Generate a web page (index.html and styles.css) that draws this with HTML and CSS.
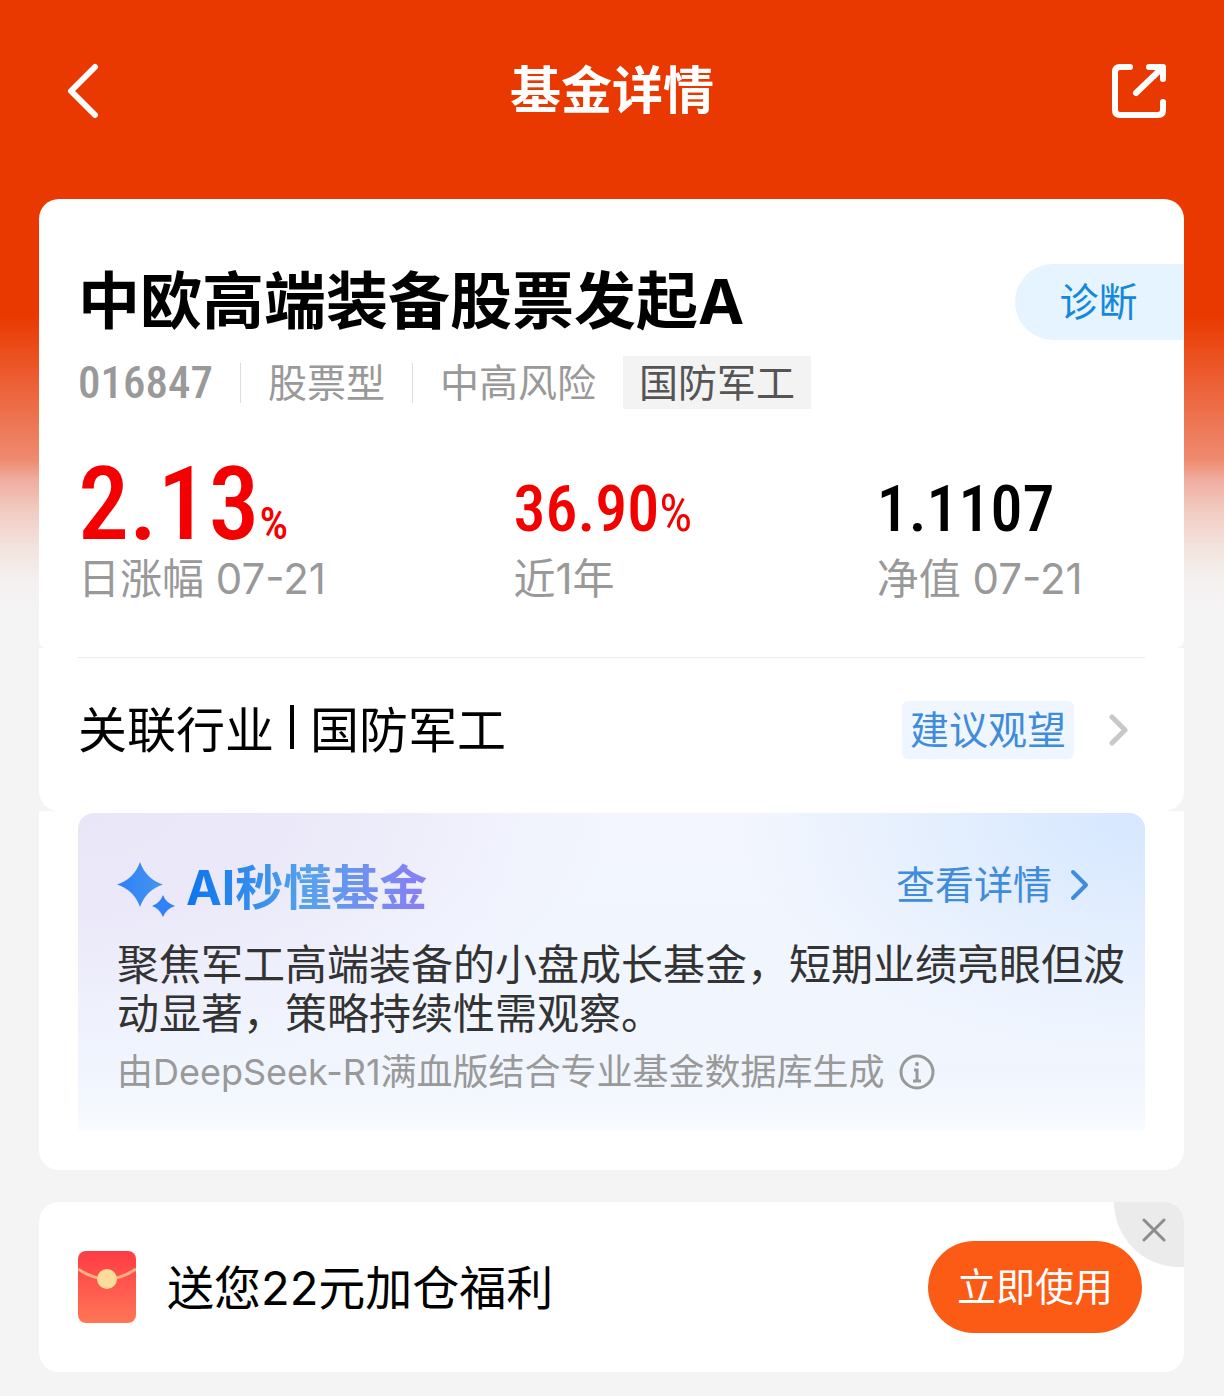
FILE: index.html
```html
<!DOCTYPE html>
<html lang="zh-CN">
<head>
    <meta charset="UTF-8">
    <meta name="viewport" content="width=device-width, initial-scale=1.0">
    <title>基金详情</title>
    <link rel="stylesheet" href="styles.css">
</head>
<body>
    <header class="topbar">
        <button type="button" class="icon-btn" aria-label="返回">
            <svg width="56" height="56" viewBox="0 0 56 56" fill="none" stroke="#fff" stroke-width="6" stroke-linecap="round" stroke-linejoin="round">
                <path d="M39 4 15 28 39 52"/>
            </svg>
        </button>
        <h1>基金详情</h1>
        <button type="button" class="icon-btn" aria-label="分享">
            <svg width="56" height="56" viewBox="0 0 56 56" fill="none" stroke="#fff" stroke-width="6" stroke-linecap="round" stroke-linejoin="round">
                <path d="M18 4H8Q3 4 3 9v38q0 5 5 5h38q5 0 5-5V39"/>
                <path d="M37 4h14v12M24 30 49 6"/>
                <path d="M41 4h10v10Z" fill="#fff" stroke="none"/>
            </svg>
        </button>
    </header>

    <main>
        <section class="card summary">
            <div class="title-row">
                <h2>中欧高端装备股票发起A</h2>
                <button type="button" class="diagnose">诊断</button>
            </div>
            <div class="meta">
                <span class="code">016847</span>
                <span class="divider"></span>
                <span>股票型</span>
                <span class="divider"></span>
                <span>中高风险</span>
                <span class="tag">国防军工</span>
            </div>
            <dl class="stats">
                <div>
                    <dd class="value up big">2.13<small>%</small></dd>
                    <dt>日涨幅 07-21</dt>
                </div>
                <div>
                    <dd class="value up">36.90<span class="percent">%</span></dd>
                    <dt>近1年</dt>
                </div>
                <div>
                    <dd class="value">1.1107</dd>
                    <dt>净值 07-21</dt>
                </div>
            </dl>
        </section>

        <section class="card industry">
            <a href="#" class="industry-link">
                <span class="industry-name">关联行业<i class="bar"></i>国防军工</span>
                <span class="advice">建议观望</span>
                <svg width="20" height="32" viewBox="0 0 20 32" fill="none" stroke="#c8c8c8" stroke-width="5" stroke-linecap="round" stroke-linejoin="round">
                    <path d="M3 3 16 16 3 29"/>
                </svg>
            </a>
        </section>

        <section class="card ai">
            <div class="ai-box">
                <div class="ai-head">
                    <svg width="58" height="58" viewBox="0 0 58 58">
                        <defs>
                            <linearGradient id="spark" x1="0" y1="0" x2="1" y2="0">
                                <stop offset="0" stop-color="#2f80f6"/>
                                <stop offset="1" stop-color="#4396f0"/>
                            </linearGradient>
                        </defs>
                        <path fill="url(#spark)" d="M23 3Q29 20 46 25.500 29 31 23 48 17 31 0 25.500 17 20 23 3Z"/>
                        <path fill="#2f83f7" d="M46 36Q49 44 58 47 49 50 46 58 43 50 35 47 43 44 46 36Z"/>
                    </svg>
                    <h3>AI秒懂基金</h3>
                    <a href="#" class="more">
                        <span>查看详情</span>
                        <svg width="20" height="32" viewBox="0 0 20 32" fill="none" stroke="#3f8bdc" stroke-width="4" stroke-linecap="round" stroke-linejoin="round">
                            <path d="M3 3 16 16 3 29"/>
                        </svg>
                    </a>
                </div>
                <p class="ai-text">聚焦军工高端装备的小盘成长基金，短期业绩亮眼但波动显著，策略持续性需观察。</p>
                <p class="ai-source">由DeepSeek-R1满血版结合专业基金数据库生成
                    <svg width="36" height="36" viewBox="0 0 36 36" fill="none" stroke="#999" stroke-width="3">
                        <circle cx="18" cy="18" r="16"/>
                        <path d="M15 16h3v11M14 27h8"/>
                        <circle cx="18" cy="10" r="2" fill="#999" stroke="none"/>
                    </svg>
                </p>
            </div>
        </section>

        <section class="card offer">
            <svg width="58" height="72" viewBox="0 0 58 72">
                <defs>
                    <linearGradient id="packet" x1="0" y1="0" x2="0" y2="1">
                        <stop offset="0" stop-color="#ff3b45"/>
                        <stop offset="1" stop-color="#ff7656"/>
                    </linearGradient>
                </defs>
                <rect width="58" height="72" rx="8" fill="url(#packet)"/>
                <path d="M0 18Q29 38 58 18" fill="none" stroke="#ffb184" stroke-width="3"/>
                <circle cx="29" cy="28" r="10" fill="#fddb9b"/>
            </svg>
            <p>送您22元加仓福利</p>
            <button type="button" class="use">立即使用</button>
            <button type="button" class="close" aria-label="关闭">
                <svg width="24" height="24" viewBox="0 0 24 24" stroke="#8c8c8c" stroke-width="3" stroke-linecap="round">
                    <path d="M2 2 22 22M22 2 2 22"/>
                </svg>
            </button>
        </section>
    </main>
</body>
</html>
```

FILE: styles.css
```css
* {
    box-sizing: border-box;
}

body {
    margin: 0;
    font-family: Inter, "Noto Sans CJK SC", sans-serif;
    color: #000;
    background: #f4f4f4 linear-gradient(#ea3900 0, #ea3900 315px, #ee8b70 460px, #f0ada0 480px, #f2cdc4 513px, #f3e3de 547px, #f4f0ef 580px, #f4f4f4 612px) no-repeat;
}

h1, h2, h3, p, dl, dd, dt {
    margin: 0;
}

button {
    border: none;
    padding: 0;
    font-family: inherit;
    cursor: pointer;
}

a {
    text-decoration: none;
    color: inherit;
}

svg {
    display: block;
    flex: none;
}

.topbar {
    display: flex;
    align-items: center;
    justify-content: space-between;
    height: 199px;
    padding: 0 56px 18px;
}

.topbar h1 {
    font-size: 51px;
    line-height: 60px;
    color: #fff;
}

.icon-btn {
    background: none;
}

main {
    padding: 0 40px 24px 39px;
}

.card {
    background: #fff;
    padding: 0 39px;
}

.summary {
    border-radius: 20px 20px 8px 8px;
    padding-top: 65px;
    padding-bottom: 42px;
}

.title-row {
    display: flex;
    align-items: center;
    justify-content: space-between;
    margin-right: -39px;
}

h2 {
    font-size: 62px;
    line-height: 76px;
}

.diagnose {
    width: 169px;
    height: 76px;
    padding: 0 2px 6px 0;
    border-radius: 38px 0 0 38px;
    background: #e6f4ff;
    color: #1488dc;
    font-size: 39px;
}

.meta {
    display: flex;
    align-items: center;
    gap: 27px;
    margin-top: 16px;
    font-size: 39px;
    line-height: 53px;
    color: #999;
}

.code {
    font-family: "Roboto Condensed", Roboto, sans-serif;
    font-size: 45px;
    font-weight: 500;
}

.divider {
    width: 1px;
    height: 40px;
    background: #ddd;
}

.tag {
    padding: 0 16px;
    background: #f3f3f3;
    color: #555;
}

.stats {
    display: grid;
    grid-template-columns: 435fr 363fr 268fr;
    margin-top: 47px;
}

.stats > div {
    display: flex;
    flex-direction: column;
    justify-content: flex-end;
}

.value {
    font-family: "Roboto Condensed", Roboto, sans-serif;
    font-size: 64px;
    font-weight: 500;
    line-height: 84px;
}

.up {
    color: #f40000;
}

.big {
    font-size: 102px;
    line-height: 96px;
}

.value small {
    font-size: 45px;
    line-height: 45px;
}

.percent {
    font-size: 52px;
    font-weight: normal;
    line-height: 52px;
}

.stats dt {
    font-size: 42px;
    line-height: 54px;
    color: #999;
}

.industry {
    border-radius: 0 0 20px 20px;
    padding-top: 9px;
}

.industry-link {
    display: flex;
    align-items: center;
    height: 154px;
    padding-right: 16px;
    padding-bottom: 10px;
    border-top: 1px solid #ececec;
}

.industry-name {
    display: flex;
    align-items: center;
    flex: 1;
    padding-bottom: 6px;
    font-size: 49px;
}

.bar {
    width: 4px;
    height: 44px;
    margin: 0 16px;
    background: #000;
}

.advice {
    margin-right: 35px;
    padding: 0 8px;
    border-radius: 6px;
    background: #eff6ff;
    color: #3f8bdc;
    font-size: 39px;
    line-height: 58px;
}

.ai {
    border-radius: 0 0 20px 20px;
    padding-top: 2px;
    padding-bottom: 39px;
}

.ai-box {
    padding: 45px 20px 35px 39px;
    border-radius: 16px 16px 4px 4px;
    background:
        linear-gradient(to bottom, rgba(248, 251, 255, 0) 80%, #f8fbff 100%),
        radial-gradient(ellipse 38% 75% at 100% 0, #d5e7ff 0, rgba(213, 231, 255, 0) 100%),
        radial-gradient(ellipse 50% 80% at 0 0, #e9e6f8 0, #ebe9f9 40%, rgba(240, 242, 253, 0) 100%),
        linear-gradient(#f3f6fe, #eff5fe);
}

.ai-head {
    display: flex;
    align-items: center;
    height: 60px;
    margin-right: 35px;
}

.ai-head h3 {
    margin-left: 11px;
    margin-right: auto;
    font-size: 48px;
    line-height: 60px;
    background: linear-gradient(90deg, #0c74ee, #55a2ec 50%, #8b7df6);
    -webkit-background-clip: text;
    background-clip: text;
    color: transparent;
}

.more {
    display: flex;
    align-items: center;
    gap: 18px;
    padding-bottom: 6px;
    color: #3f8bdc;
    font-size: 39px;
    line-height: 48px;
}

.ai-text {
    margin-top: 22px;
    font-size: 42px;
    line-height: 49px;
    color: #333;
}

.ai-source {
    display: flex;
    align-items: center;
    gap: 14px;
    margin-top: 10px;
    font-size: 36px;
    line-height: 48px;
    color: #999;
}

.offer {
    position: relative;
    display: flex;
    align-items: center;
    height: 170px;
    margin-top: 32px;
    padding-right: 42px;
    border-radius: 20px;
    overflow: hidden;
}

.offer p {
    flex: 1;
    margin-left: 31px;
    padding-bottom: 6px;
    font-size: 47px;
}

.use {
    width: 214px;
    height: 92px;
    padding-bottom: 6px;
    border-radius: 46px;
    background: #fb5b14;
    color: #fff;
    font-size: 39px;
}

.close {
    position: absolute;
    top: 0;
    right: 0;
    display: flex;
    align-items: center;
    justify-content: center;
    width: 70px;
    height: 65px;
    padding: 0 0 10px 10px;
    border-radius: 0 0 0 70px;
    background: #ebebeb;
}
```
